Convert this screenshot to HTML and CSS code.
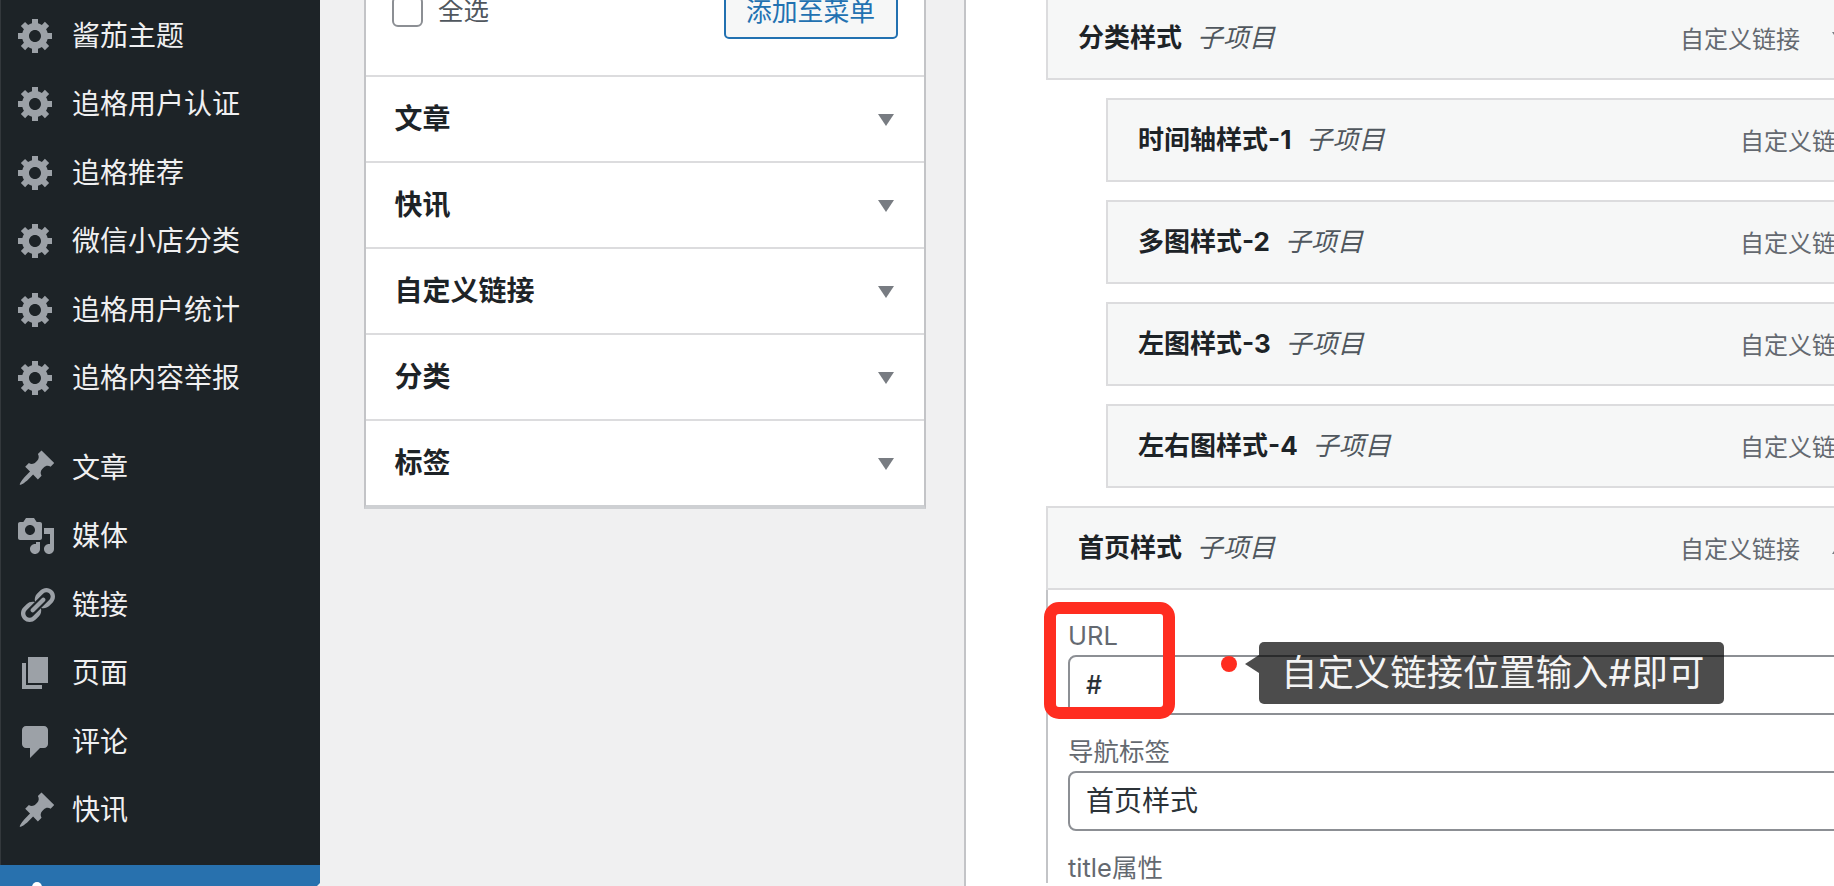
FILE: index.html
```html
<!DOCTYPE html>
<html lang="zh-CN">
<head>
<meta charset="utf-8">
<title>菜单</title>
<link rel="stylesheet" href="styles.css">
</head>
<body>
<svg class="defs" width="0" height="0" aria-hidden="true">
  <symbol id="i-gear" viewBox="0 0.5 20 20"><path d="M18 12h-2.18c-.17.7-.44 1.35-.81 1.93l1.54 1.54-2.1 2.1-1.54-1.54c-.58.36-1.23.63-1.91.79V19H8v-2.18c-.68-.16-1.33-.43-1.91-.79l-1.54 1.54-2.12-2.12 1.54-1.54c-.36-.58-.63-1.23-.79-1.91H1V9.03h2.17c.16-.7.44-1.35.8-1.94L2.43 5.55l2.1-2.1 1.54 1.54c.58-.37 1.24-.64 1.93-.81V2h3v2.18c.68.16 1.33.43 1.91.79l1.54-1.54 2.12 2.12-1.54 1.54c.36.59.64 1.24.8 1.94H18V12zm-8.5 1.5c1.66 0 3-1.34 3-3s-1.34-3-3-3-3 1.34-3 3 1.34 3 3 3z"/></symbol>
  <symbol id="i-pin" viewBox="-0.5 0 20 20"><path d="M10.44 3.02l1.82-1.82 6.36 6.35-1.83 1.82c-1.05-.68-2.48-.57-3.41.36l-.75.75c-.92.93-1.04 2.35-.35 3.41l-1.83 1.82-2.41-2.41-2.8 2.79c-.42.42-3.38 2.71-3.8 2.29s1.86-3.39 2.28-3.81l2.79-2.79L4.1 9.36l1.83-1.82c1.05.69 2.48.57 3.4-.36l.75-.75c.93-.92 1.05-2.35.36-3.41z"/></symbol>
</svg>
<div class="page">
  <nav class="sidebar">
    <ul class="menu">
      <li class="menu-item"><svg class="menu-icon"><use href="#i-gear"/></svg><span>酱茄主题</span></li>
      <li class="menu-item"><svg class="menu-icon"><use href="#i-gear"/></svg><span>追格用户认证</span></li>
      <li class="menu-item"><svg class="menu-icon"><use href="#i-gear"/></svg><span>追格推荐</span></li>
      <li class="menu-item"><svg class="menu-icon"><use href="#i-gear"/></svg><span>微信小店分类</span></li>
      <li class="menu-item"><svg class="menu-icon"><use href="#i-gear"/></svg><span>追格用户统计</span></li>
      <li class="menu-item"><svg class="menu-icon"><use href="#i-gear"/></svg><span>追格内容举报</span></li>
    </ul>
    <ul class="menu menu-second">
      <li class="menu-item"><svg class="menu-icon"><use href="#i-pin"/></svg><span>文章</span></li>
      <li class="menu-item"><svg class="menu-icon" viewBox="0 0 20 20"><path d="M13 11V4c0-.55-.45-1-1-1h-1.67L9 1H5L3.67 3H2c-.55 0-1 .45-1 1v7c0 .55.45 1 1 1h10c.55 0 1-.45 1-1zM7 4.5c1.38 0 2.5 1.12 2.5 2.5S8.38 9.5 7 9.5 4.5 8.38 4.5 7 5.62 4.5 7 4.5zM14 6h5v10.5c0 1.38-1.12 2.5-2.5 2.5S14 17.88 14 16.5s1.12-2.5 2.5-2.5c.17 0 .34.02.5.05V9h-3V6zm-4 8.05V13h2v3.5c0 1.38-1.12 2.5-2.5 2.5S7 17.88 7 16.5 8.12 14 9.5 14c.17 0 .34.02.5.05z"/></svg><span>媒体</span></li>
      <li class="menu-item"><svg class="menu-icon" viewBox="-0.5 0 20 20"><path d="M17.74 2.76c1.68 1.69 1.68 4.41 0 6.1l-1.53 1.52c-1.12 1.12-2.7 1.47-4.14 1.09l2.62-2.61.76-.77.76-.76c.84-.84.84-2.2 0-3.04-.84-.85-2.2-.85-3.04 0l-.77.76-3.38 3.38c-.37-1.44-.02-3.02 1.1-4.14l1.52-1.53c1.69-1.68 4.42-1.68 6.1 0zM8.59 13.43l5.34-5.34c.42-.42.42-1.1 0-1.52-.44-.43-1.13-.39-1.53 0l-5.33 5.34c-.42.42-.42 1.1 0 1.52.44.43 1.13.39 1.52 0zm-.76 2.29l4.14-4.15c.38 1.44.03 3.02-1.09 4.14l-1.52 1.53c-1.69 1.68-4.41 1.68-6.1 0-1.68-1.68-1.68-4.42 0-6.1l1.53-1.52c1.12-1.12 2.7-1.47 4.14-1.1l-4.14 4.15c-.85.84-.85 2.2 0 3.05.84.84 2.2.84 3.04 0z"/></svg><span>链接</span></li>
      <li class="menu-item"><svg class="menu-icon" viewBox="0 0 20 20"><path d="M6 15V2h10v13H6zm-1 1h8v2H3V5h2v11z"/></svg><span>页面</span></li>
      <li class="menu-item"><svg class="menu-icon" viewBox="0 0 20 20"><path d="M5 2h9c1.1 0 2 .9 2 2v7c0 1.1-.9 2-2 2h-2l-5 5v-5H5c-1.1 0-2-.9-2-2V4c0-1.1.9-2 2-2z"/></svg><span>评论</span></li>
      <li class="menu-item"><svg class="menu-icon"><use href="#i-pin"/></svg><span>快讯</span></li>
    </ul>
    <div class="menu-current"><i class="current-icon"></i><i class="current-notch"></i></div>
  </nav>

  <main class="content">
    <section class="side-col">
      <div class="accordion">
        <div class="select-row">
          <label class="select-all"><i class="checkbox"></i><span>全选</span></label>
          <button class="add-btn" type="button">添加至菜单</button>
        </div>
        <div class="acc-row"><strong>文章</strong><i class="tri-down"></i></div>
        <div class="acc-row"><strong>快讯</strong><i class="tri-down"></i></div>
        <div class="acc-row"><strong>自定义链接</strong><i class="tri-down"></i></div>
        <div class="acc-row"><strong>分类</strong><i class="tri-down"></i></div>
        <div class="acc-row"><strong>标签</strong><i class="tri-down"></i></div>
      </div>
    </section>

    <section class="menu-col">
      <div class="card">
        <div class="card-title"><strong>分类样式</strong><em>子项目</em></div>
        <div class="card-meta"><span>自定义链接</span><i class="tri-down"></i></div>
      </div>
      <div class="card card-sub">
        <div class="card-title"><strong>时间轴样式-1</strong><em>子项目</em></div>
        <div class="card-meta"><span>自定义链接</span><i class="tri-down"></i></div>
      </div>
      <div class="card card-sub">
        <div class="card-title"><strong>多图样式-2</strong><em>子项目</em></div>
        <div class="card-meta"><span>自定义链接</span><i class="tri-down"></i></div>
      </div>
      <div class="card card-sub">
        <div class="card-title"><strong>左图样式-3</strong><em>子项目</em></div>
        <div class="card-meta"><span>自定义链接</span><i class="tri-down"></i></div>
      </div>
      <div class="card card-sub">
        <div class="card-title"><strong>左右图样式-4</strong><em>子项目</em></div>
        <div class="card-meta"><span>自定义链接</span><i class="tri-down"></i></div>
      </div>
      <div class="open-item">
        <div class="card">
          <div class="card-title"><strong>首页样式</strong><em>子项目</em></div>
          <div class="card-meta"><span>自定义链接</span><i class="tri-up"></i></div>
        </div>
        <div class="card-body">
          <div class="field">
            <label class="field-label">URL</label>
            <input class="field-input field-url" type="text" value="#">
          </div>
          <div class="field">
            <label class="field-label">导航标签</label>
            <input class="field-input" type="text" value="首页样式">
          </div>
          <div class="field">
            <label class="field-label">title属性</label>
          </div>
        </div>
      </div>
    </section>
  </main>

  <div class="mark-frame"></div>
  <div class="mark-dot"></div>
  <div class="mark-tip">自定义链接位置输入#即可</div>
</div>
</body>
</html>
```

FILE: styles.css
```css
* { box-sizing: border-box; }
html, body { margin: 0; padding: 0; }
body {
  width: 1834px;
  height: 886px;
  overflow: hidden;
  background: #f0f0f1;
  font-family: Inter, "Noto Sans CJK SC", "Liberation Sans", sans-serif;
  color: #1d2327;
}
.defs { position: absolute; }
.page {
  position: relative;
  display: flex;
  width: 1834px;
  height: 886px;
  overflow: hidden;
}

/* sidebar */
.sidebar {
  flex: 0 0 320px;
  height: 886px;
  display: flex;
  flex-direction: column;
  background: #1d2327;
  border-left: 1px solid #33383c;
  padding-top: 1.5px;
}
.menu { list-style: none; margin: 0; padding: 0; }
.menu-second { margin-top: 21px; }
.menu-item {
  display: flex;
  align-items: center;
  height: 68.5px;
  color: #f0f0f1;
  font-size: 28px;
  line-height: 1;
}
.menu-icon {
  flex: 0 0 40px;
  width: 40px;
  height: 40px;
  margin: 0 16px 0 15px;
  fill: #9ca1a7;
}
.menu-current {
  position: relative;
  flex: 1 0 auto;
  margin: 20px 0 0 -1px;
  background: #2871ae;
  overflow: hidden;
}
.current-icon {
  position: absolute;
  left: 32px;
  top: 17px;
  width: 10px;
  height: 10px;
  border-radius: 50%;
  background: #fff;
}
.current-notch {
  position: absolute;
  right: 0;
  top: 18px;
  border: 8px solid transparent;
  border-right-color: #f0f0f1;
  border-left-width: 0;
}

/* main */
.content { flex: 1; display: flex; min-width: 0; height: 886px; }
.side-col { flex: 0 0 644px; padding-left: 44px; }
.accordion {
  width: 562px;
  margin-top: -20px;
  background: #fff;
  border: 2px solid #c3c4c7;
  border-top: 0;
  border-bottom: 4px solid #ced0d3;
}
.select-row {
  display: flex;
  justify-content: space-between;
  align-items: flex-start;
  height: 95px;
  padding: 3px 26px 0;
}
.select-all {
  display: flex;
  align-items: flex-start;
  gap: 15px;
  color: #50575e;
  font-size: 25.5px;
  line-height: 34px;
}
.select-all span { margin-top: 11px; }
.checkbox {
  display: block;
  width: 31px;
  height: 31px;
  margin-top: 13px;
  border: 2px solid #8c8f94;
  border-radius: 6px;
  background: #fff;
}
.add-btn {
  width: 174px;
  height: 56px;
  padding: 0 1px 4px 0;
  background: #f6f7f7;
  color: #2271b1;
  border: 2px solid #2271b1;
  border-radius: 5px;
  font: inherit;
  font-size: 25.8px;
}
.acc-row {
  display: flex;
  justify-content: space-between;
  align-items: center;
  height: 86px;
  padding: 0 30px 0 28.5px;
  border-top: 2px solid #dcdcde;
  font-size: 28px;
}
.acc-row strong { font-weight: 700; margin-bottom: 5px; }
.tri-down, .tri-up {
  display: block;
  width: 0;
  height: 0;
  border-left: 8px solid transparent;
  border-right: 8px solid transparent;
}
.tri-down { border-top: 12px solid #787c82; }
.tri-up { border-bottom: 12px solid #787c82; }
.acc-row .tri-down { margin-top: 2px; }

.menu-col {
  flex: 1;
  min-width: 0;
  display: flex;
  flex-direction: column;
  gap: 18px;
  margin-top: -4px;
  padding-left: 80px;
  background: #fff;
  border-left: 2px solid #c3c4c7;
}
.card {
  flex: 0 0 84px;
  display: flex;
  justify-content: space-between;
  align-items: center;
  width: 845px;
  height: 84px;
  padding: 0 41px 0 30px;
  background: #f6f7f7;
  border: 2px solid #dcdcde;
  font-size: 26px;
}
.card-sub { margin-left: 60px; }
.card-title { display: flex; align-items: center; gap: 15px; margin-bottom: 5px; }
.card-title strong { font-weight: 700; color: #1d2327; }
.card-title em { font-style: italic; color: #50575e; }
.card-meta {
  display: flex;
  align-items: center;
  gap: 32px;
  margin-bottom: 2px;
  color: #646970;
  font-size: 24px;
}
.card-meta i { margin-top: 2px; }
.card-body {
  width: 845px;
  padding: 31px 20px 0;
  border-left: 2px solid #c3c4c7;
}
.field { margin-bottom: 22px; }
.field-label {
  display: block;
  height: 30px;
  margin-bottom: 4px;
  color: #646970;
  font-size: 25.5px;
  line-height: 30px;
}
.field-input {
  display: block;
  width: 100%;
  height: 60px;
  padding: 0 16px 4px;
  background: #fff;
  color: #2c3338;
  border: 2px solid #8c8f94;
  border-radius: 8px;
  outline: 0;
  font: inherit;
  font-size: 28px;
}
.field-url { font-size: 25px; font-weight: 500; padding-bottom: 0; }

/* annotation overlays */
.mark-frame {
  position: absolute;
  left: 1044px;
  top: 602px;
  width: 131px;
  height: 117px;
  border: 12px solid #ff2d20;
  border-radius: 15px;
}
.mark-dot {
  position: absolute;
  left: 1221px;
  top: 656px;
  width: 16px;
  height: 16px;
  border-radius: 50%;
  background: #ff2d20;
}
.mark-tip {
  position: absolute;
  left: 1259px;
  top: 642px;
  width: 465px;
  height: 62px;
  padding-left: 22px;
  background: rgba(0, 0, 0, 0.7);
  color: #f4f4f4;
  border-radius: 5px;
  font-size: 36.4px;
  line-height: 62px;
  white-space: nowrap;
}
.mark-tip::before {
  content: "";
  position: absolute;
  left: -14px;
  top: 13px;
  border-top: 9px solid transparent;
  border-bottom: 9px solid transparent;
  border-right: 14px solid rgba(0, 0, 0, 0.7);
}
```
